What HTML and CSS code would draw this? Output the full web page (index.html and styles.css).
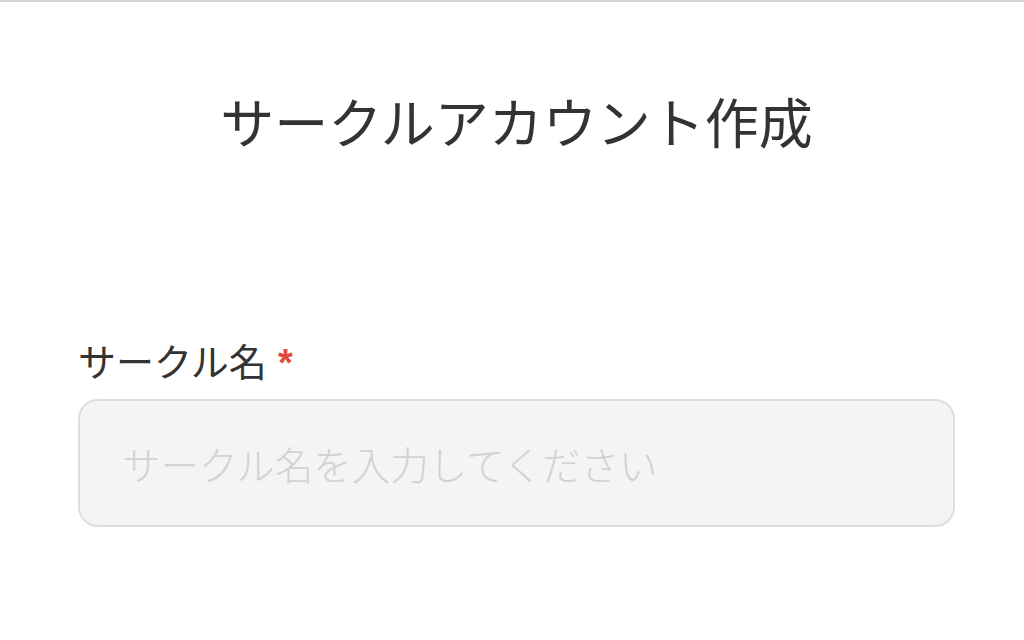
FILE: index.html
```html
<!DOCTYPE html>
<html lang="ja">
  <head>
    <meta charset="UTF-8" />
    <meta name="viewport" content="width=device-width, initial-scale=1.0" />
    <title>サークルアカウント作成</title>
    <link rel="stylesheet" href="styles.css">
  </head>

  <body>
    <div class="page">
      <h1 class="page-title">サークルアカウント作成</h1>

      <form class="circle-form">
        <label for="circleName" class="field-label">
          サークル名<span class="required">*</span>
        </label>
        <input
          type="text"
          id="circleName"
          name="circleName"
          class="field-input"
          placeholder="サークル名を入力してください"
        />
      </form>
    </div>
  </body>
</html>
```

FILE: styles.css
```css
* {
  margin: 0;
  padding: 0;
  box-sizing: border-box;
}
body {
  font-family: "Noto Sans CJK JP", "Noto Sans", sans-serif;
  background-color: #ffffff;
  color: #333333;
  border-top: 2px solid #d4d4d4;
  min-height: 100vh;
}
.page {
  padding: 0 69px 0 78px;
}

.page-title {
  text-align: center;
  font-size: 54px;
  font-weight: 400;
  line-height: 1.4;
  padding-top: 81px;
  color: #333333;
}

.circle-form {
  margin-top: 174px;
}

.field-label {
  display: block;
  font-size: 38px;
  font-weight: 400;
  line-height: 1.4;
  margin-bottom: 9px;
  color: #333333;
}

.required {
  color: #e04a3a;
  font-family: "Liberation Sans", sans-serif;
  font-size: 38px;
  font-weight: 700;
  margin-left: 11px;
}

.field-input {
  width: 100%;
  height: 128px;
  padding: 0 42px;
  background-color: #f4f4f4;
  border: 2px solid #dedede;
  border-radius: 20px;
  font-family: inherit;
  font-size: 38.5px;
  font-weight: 300;
  color: #333333;
  outline: none;
}

.field-input::placeholder {
  color: #d2d2d2;
}
```
